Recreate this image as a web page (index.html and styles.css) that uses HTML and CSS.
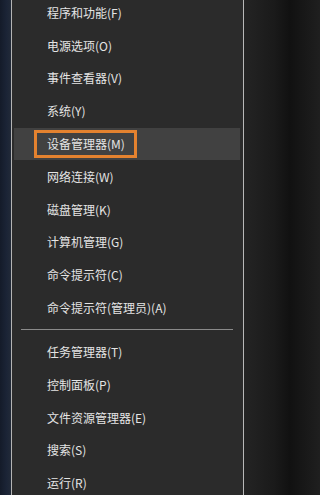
FILE: index.html
```html
<!DOCTYPE html>
<html lang="zh-CN">
<head>
<meta charset="utf-8">
<title>Win+X 菜单</title>
<link rel="stylesheet" href="styles.css">
</head>
<body>
<div class="screen">
  <div class="desk-left"></div>
  <nav class="menu">
    <ul class="group first">
      <li class="item"><span class="label">程序和功能(F)</span></li>
      <li class="item"><span class="label">电源选项(O)</span></li>
      <li class="item"><span class="label">事件查看器(V)</span></li>
      <li class="item"><span class="label">系统(Y)</span></li>
      <li class="item hover"><span class="label marked">设备管理器(M)</span></li>
      <li class="item"><span class="label">网络连接(W)</span></li>
      <li class="item"><span class="label">磁盘管理(K)</span></li>
      <li class="item"><span class="label">计算机管理(G)</span></li>
      <li class="item"><span class="label">命令提示符(C)</span></li>
      <li class="item"><span class="label">命令提示符(管理员)(A)</span></li>
    </ul>
    <div class="sep"></div>
    <ul class="group">
      <li class="item"><span class="label">任务管理器(T)</span></li>
      <li class="item"><span class="label">控制面板(P)</span></li>
      <li class="item"><span class="label">文件资源管理器(E)</span></li>
      <li class="item"><span class="label">搜索(S)</span></li>
      <li class="item"><span class="label">运行(R)</span></li>
    </ul>
  </nav>
  <div class="desk-right"></div>
</div>
</body>
</html>
```

FILE: styles.css
```css
html, body {
  margin: 0;
  padding: 0;
  height: 495px;
  overflow: hidden;
  background: #1e1e1e;
}

.screen {
  display: flex;
  height: 495px;
  font-family: "Noto Sans CJK SC", "Noto Sans", sans-serif;
  font-size: 12px;
}

.desk-left {
  width: 11px;
  flex: none;
  background: linear-gradient(to right, #141b29 0%, #1b2436 60%, #222a38 100%);
}

.menu {
  width: 231px;
  flex: none;
  background: #2b2b2b;
  border-left: 1px solid #b4b4b4;
  border-right: 1px solid #b8b8b8;
  overflow: hidden;
}

.desk-right {
  flex: 1;
  background: linear-gradient(to right, #242424 0%, #1a1a1a 40%, #111 60%, #1f1f1f 100%);
}

.group {
  list-style: none;
  margin: 0;
  padding: 0;
}

.group.first {
  margin-top: -3.6px;
}

.item {
  height: 32.8px;
  margin: 0 3px 0 2px;
  padding-left: 20px;
  display: flex;
  align-items: center;
  color: #e4e4e4;
  line-height: 1;
}

.item.hover {
  background: #414141;
}

.label {
  display: inline-flex;
  align-items: center;
  height: 22px;
  padding: 0 9px 0 10px;
  border: 3px solid transparent;
  white-space: nowrap;
}

.label.marked {
  border-color: #e4822f;
}

.sep {
  height: 1px;
  margin: 4.6px 10px 5.6px 9px;
  background: #8a8a8a;
}
```
